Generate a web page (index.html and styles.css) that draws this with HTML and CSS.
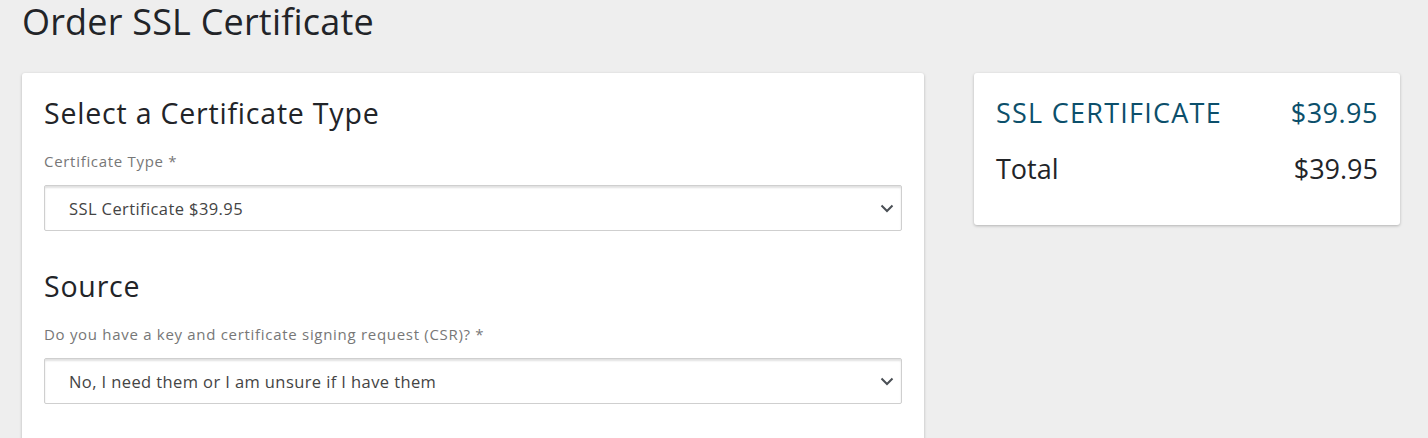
FILE: index.html
```html
<!DOCTYPE html>
<html lang="en">
<head>
<meta charset="utf-8">
<title>Order SSL Certificate</title>
<link rel="stylesheet" href="styles.css">
</head>
<body>
<div class="page">
  <h1 class="page-title">Order SSL Certificate</h1>
  <div class="layout">
    <div class="card main-card">
      <section class="section">
        <h2 class="section-title">Select a Certificate Type</h2>
        <label class="field-label">Certificate Type *</label>
        <div class="select">
          <span class="select-value">SSL Certificate $39.95</span>
          <svg class="chevron" width="14" height="9" viewBox="0 0 14 9"><path d="M1.5 1.5 L7 7 L12.5 1.5" fill="none" stroke="#4a4f55" stroke-width="2"/></svg>
        </div>
      </section>
      <section class="section">
        <h2 class="section-title">Source</h2>
        <label class="field-label">Do you have a key and certificate signing request (CSR)? *</label>
        <div class="select">
          <span class="select-value">No, I need them or I am unsure if I have them</span>
          <svg class="chevron" width="14" height="9" viewBox="0 0 14 9"><path d="M1.5 1.5 L7 7 L12.5 1.5" fill="none" stroke="#4a4f55" stroke-width="2"/></svg>
        </div>
      </section>
    </div>
    <div class="card summary-card">
      <div class="summary-row item-row">
        <span class="item-name">SSL CERTIFICATE</span>
        <span class="item-price">$39.95</span>
      </div>
      <div class="summary-row total-row">
        <span>Total</span>
        <span>$39.95</span>
      </div>
    </div>
  </div>
</div>
</body>
</html>
```
FILE: styles.css
```css
html, body {
  margin: 0;
  padding: 0;
  background: #eeeeee;
  font-family: "Open Sans", "Lato", sans-serif;
  color: #222426;
  overflow: hidden;
}
.page {
  padding: 0 28px 0 22px;
}
.page-title {
  margin: 0;
  padding-top: 4px;
  font-size: 36px;
  font-weight: 400;
  line-height: 36px;
  letter-spacing: 0.2px;
  color: #222428;
}
.layout {
  display: flex;
  align-items: flex-start;
  gap: 50px;
  margin-top: 33px;
}
.card {
  background: #fff;
  border-radius: 3px;
  box-shadow: 0 1px 3px rgba(0,0,0,0.25);
}
.main-card {
  width: 902px;
  box-sizing: border-box;
  padding: 22px 22px 60px 22px;
}
.section-title {
  margin: 0;
  font-size: 28.5px;
  font-weight: 400;
  line-height: 36px;
  letter-spacing: 0.8px;
  color: #222428;
}
.section + .section {
  margin-top: 37px;
}
.field-label {
  display: block;
  margin-top: 20px;
  font-size: 15px;
  line-height: 20px;
  letter-spacing: 0.7px;
  color: #777;
}
.select {
  margin-top: 14px;
  height: 46px;
  box-sizing: border-box;
  border: 1px solid #cfcfcf;
  border-radius: 2px;
  box-shadow: inset 0 2px 2px rgba(0,0,0,0.12);
  display: flex;
  align-items: center;
  justify-content: space-between;
  padding: 0 7px 0 24px;
}
.select-value {
  font-size: 16.5px;
  letter-spacing: 0.4px;
  color: #444;
}
.chevron {
  display: block;
}
.summary-card {
  width: 426px;
  box-sizing: border-box;
  padding: 22px 22px 38px 22px;
}
.summary-row {
  display: flex;
  justify-content: space-between;
  font-size: 27px;
  line-height: 36px;
}
.item-row {
  color: #0c4f6b;
}
.item-name {
  letter-spacing: 1.25px;
}
.item-price {
  letter-spacing: 0.5px;
}
.total-row {
  margin-top: 20px;
  color: #222428;
}
```
